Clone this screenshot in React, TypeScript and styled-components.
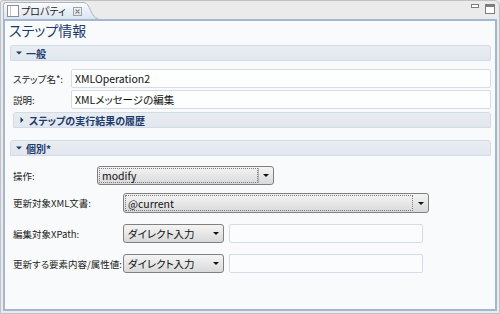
import React from 'react';
import styled, { createGlobalStyle } from 'styled-components';

const GlobalStyle = createGlobalStyle`
  html, body {
    margin: 0;
    padding: 0;
    background: #e9e9e9;
  }
  body {
    font-family: "Noto Sans CJK JP", "Noto Sans", sans-serif;
    font-size: 10px;
    font-feature-settings: "palt";
    color: #222;
  }
`;

const navy = '#1c3b6d';

const View = styled.div`
  width: 500px;
  height: 314px;
  box-sizing: border-box;
  border: 1px solid #c2c2c2;
  border-radius: 3px 6px 0 0;
  background: #ebebeb;
  padding: 0 2px 2px 2px;
  display: flex;
  flex-direction: column;
`;

const TabBar = styled.div`
  height: 18px;
  display: flex;
  align-items: flex-end;
  position: relative;
  z-index: 1;
`;

const Tab = styled.div`
  display: flex;
  align-items: flex-end;
  height: 17px;
`;

const TabBody = styled.div`
  height: 17px;
  box-sizing: border-box;
  display: flex;
  align-items: center;
  gap: 2px;
  padding: 0 0 0 3px;
  border-top: 1px solid #a8b5c6;
  border-left: 1px solid #a8b5c6;
  border-radius: 3px 0 0 0;
  background: linear-gradient(#fbfcfe, #dbe4ef);
`;

const TabLabel = styled.span`
  font-size: 10px;
  color: #1a1a1a;
  line-height: 14px;
  margin-right: 5px;
`;

const Spacer = styled.div`
  flex: 1;
`;

const ViewButtons = styled.div`
  display: flex;
  gap: 6px;
  align-self: flex-start;
  margin-top: 3px;
  margin-right: 2px;
`;

const Panel = styled.div`
  flex: 1;
  border: 2px solid #a2b8d2;
  background: #f8fafb;
  display: flex;
  flex-direction: column;
  padding: 0 4px 0 5px;
`;

const Title = styled.h1`
  margin: 0 0 0 -1px;
  font-size: 14px;
  line-height: 19px;
  font-weight: normal;
  color: ${navy};
  height: 24px;
`;

const SectionHeader = styled.div<{ $indent?: number }>`
  height: 16px;
  box-sizing: border-box;
  margin-left: ${p => p.$indent ?? 0}px;
  display: flex;
  align-items: center;
  gap: 4px;
  padding-left: 5px;
  border: 1px solid #d3dce6;
  border-radius: 3px 3px 0 0;
  background: linear-gradient(#e8edf2, #e1e7ee);
  color: ${navy};
  font-weight: bold;
  font-size: 10px;
`;

const SectionBody = styled.div<{ $top: number }>`
  padding: ${p => p.$top}px 0 0 3px;
  display: flex;
  flex-direction: column;
`;

const Row = styled.div<{ $gap?: number }>`
  display: flex;
  align-items: center;
  margin-bottom: ${p => p.$gap ?? 0}px;
`;

const Label = styled.span<{ $width: number }>`
  width: ${p => p.$width}px;
  flex: none;
  white-space: nowrap;
  font-size: 9.5px;
  color: #222;
`;

const Input = styled.div<{ $width?: number }>`
  ${p => (p.$width ? `width: ${p.$width}px;` : 'flex: 1;')}
  height: 19px;
  box-sizing: border-box;
  border: 1px solid #d4dce5;
  border-radius: 2px;
  background: #fdfefe;
  padding-left: 3px;
  display: flex;
  align-items: center;
  font-size: 10.5px;
  color: #111;
`;

const Combo = styled.div<{ $width: number; $height: number }>`
  width: ${p => p.$width}px;
  height: ${p => p.$height}px;
  box-sizing: border-box;
  border: 1px solid #808080;
  border-radius: 3px;
  background: linear-gradient(#f4f4f4, #e6e6e6 55%, #d9d9d9);
  display: flex;
  align-items: stretch;
  padding: 1px;
  flex: none;
`;

const ComboText = styled.div<{ $focused?: boolean }>`
  flex: 1;
  display: flex;
  align-items: center;
  padding-left: 2px;
  font-size: 10.5px;
  color: #111;
  border: 1px ${p => (p.$focused ? 'dotted #7a7a7a' : 'solid transparent')};
`;

const ComboButton = styled.div<{ $divided?: boolean }>`
  width: 13px;
  display: flex;
  align-items: center;
  justify-content: center;
  border-left: 1px solid ${p => (p.$divided ? '#b4b4b4' : 'transparent')};
`;

const Arrow = styled.span`
  width: 0;
  height: 0;
  border-left: 3px solid transparent;
  border-right: 3px solid transparent;
  border-top: 3px solid #111;
`;

const TextField = styled(Input)`
  margin-left: 5px;
  background: #fbfcfd;
`;

const ExpandIcon = ({ open }: { open: boolean }) => (
  <svg width="6" height="6" viewBox="0 0 6 6">
    {open ? <path d="M0 1.5 H6 L3 4.5 Z" fill={navy} /> : <path d="M1.5 0 V6 L4.5 3 Z" fill={navy} />}
  </svg>
);

const PropertiesIcon = () => (
  <svg width="12" height="12" viewBox="0 0 12 12">
    <rect x="0.5" y="0.5" width="11" height="11" fill="#fff" stroke="#8d8d8d" />
    <line x1="3.5" y1="1" x2="3.5" y2="11" stroke="#c4c4c4" />
  </svg>
);

const CloseIcon = () => (
  <svg width="9" height="9" viewBox="0 0 9 9">
    <rect x="0.5" y="0.5" width="8" height="8" fill="none" stroke="#a0a0a0" />
    <path d="M2.5 2.5 L6.5 6.5 M6.5 2.5 L2.5 6.5" stroke="#8a8a8a" strokeWidth="1.2" />
  </svg>
);

const TabWing = () => (
  <svg width="16" height="17" viewBox="0 0 16 17">
    <defs>
      <linearGradient id="wing" x1="0" y1="0" x2="0" y2="1">
        <stop offset="0" stopColor="#fbfcfe" />
        <stop offset="1" stopColor="#dbe4ef" />
      </linearGradient>
    </defs>
    <path d="M0 0 H2 C8 0 9 17 16 17 H0 Z" fill="url(#wing)" />
    <path d="M0 0.5 H2 C8 0.5 9 16.5 16 16.5" fill="none" stroke="#a8b5c6" />
  </svg>
);

const MinimizeIcon = () => (
  <svg width="8" height="5" viewBox="0 0 8 5">
    <rect x="0.5" y="0.5" width="7" height="3" fill="#fff" stroke="#7d7d7d" />
  </svg>
);

const MaximizeIcon = () => (
  <svg width="10" height="10" viewBox="0 0 10 10">
    <rect x="0.5" y="0.5" width="9" height="9" fill="#fff" stroke="#7d7d7d" />
    <rect x="1" y="1" width="8" height="2" fill="#7d7d7d" />
  </svg>
);

const ComboBox = ({ value, width, height, focused, divided }: { value: string; width: number; height: number; focused?: boolean; divided?: boolean }) => (
  <Combo $width={width} $height={height}>
    <ComboText $focused={focused}>{value}</ComboText>
    <ComboButton $divided={divided}>
      <Arrow />
    </ComboButton>
  </Combo>
);

export default function App() {
  return (
    <>
      <GlobalStyle />
      <View>
        <TabBar>
          <Tab>
            <TabBody>
              <PropertiesIcon />
              <TabLabel>プロパティ</TabLabel>
              <CloseIcon />
            </TabBody>
            <TabWing />
          </Tab>
          <Spacer />
          <ViewButtons>
            <MinimizeIcon />
            <MaximizeIcon />
          </ViewButtons>
        </TabBar>
        <Panel>
          <Title>ステップ情報</Title>
          <SectionHeader>
            <ExpandIcon open />
            一般
          </SectionHeader>
          <SectionBody $top={8}>
            <Row $gap={2}>
              <Label $width={58}>ステップ名*:</Label>
              <Input>XMLOperation2</Input>
            </Row>
            <Row $gap={3}>
              <Label $width={58}>説明:</Label>
              <Input>XMLメッセージの編集</Input>
            </Row>
            <SectionHeader>
              <ExpandIcon open={false} />
              ステップの実行結果の履歴
            </SectionHeader>
          </SectionBody>
          <div style={{ height: 12 }} />
          <SectionHeader>
            <ExpandIcon open />
            個別*
          </SectionHeader>
          <SectionBody $top={10}>
            <Row $gap={8}>
              <Label $width={84}>操作:</Label>
              <ComboBox value="modify" width={177} height={19} focused divided />
            </Row>
            <Row $gap={11}>
              <Label $width={110}>更新対象XML文書:</Label>
              <ComboBox value="@current" width={306} height={20} focused />
            </Row>
            <Row $gap={11}>
              <Label $width={110}>編集対象XPath:</Label>
              <ComboBox value="ダイレクト入力" width={101} height={19} />
              <TextField $width={194} />
            </Row>
            <Row>
              <Label $width={110}>更新する要素内容/属性値:</Label>
              <ComboBox value="ダイレクト入力" width={101} height={19} />
              <TextField $width={194} />
            </Row>
          </SectionBody>
        </Panel>
      </View>
    </>
  );
}
